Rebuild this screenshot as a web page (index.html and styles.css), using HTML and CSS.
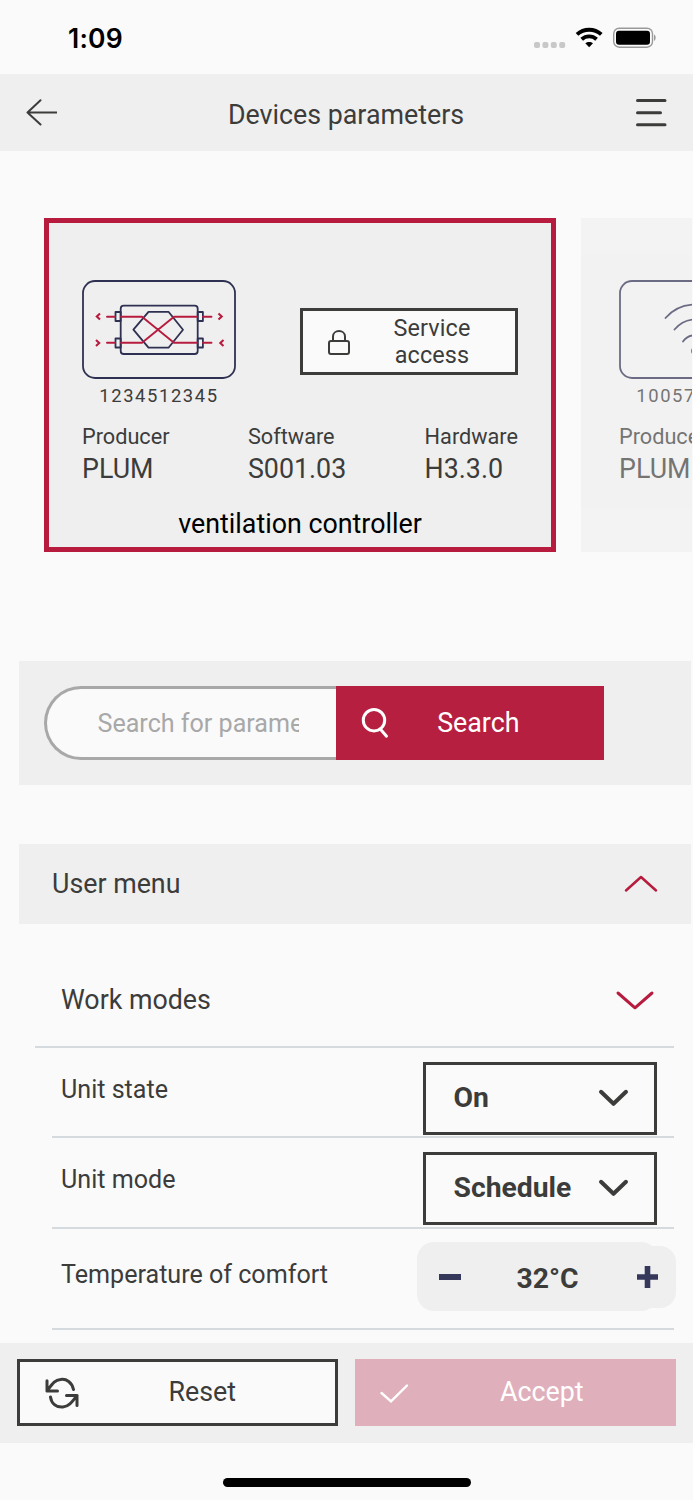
FILE: index.html
```html
<!DOCTYPE html>
<html lang="en">
<head>
<meta charset="utf-8">
<title>Devices parameters</title>
<link rel="stylesheet" href="styles.css">
</head>
<body>
<div class="app">
  <div class="status">
    <span class="time">1:09</span>
    <svg class="status-icons" width="126" height="26" viewBox="0 0 126 26">
      <g fill="#c8c8c8"><rect x="2" y="16" width="6" height="6" rx="2"/><rect x="10.400" y="16" width="6" height="6" rx="2"/><rect x="18.800" y="16" width="6" height="6" rx="2"/><rect x="27.200" y="16" width="6" height="6" rx="2"/></g>
      <g fill="none" stroke="#000" stroke-width="3.900"><path d="M45 8.400C52 2.200 62.300 2.200 69.300 8.400"/><path d="M49.700 13.200C54 9.400 60.300 9.400 64.600 13.200"/></g>
      <path d="M53.300 17.300C55.500 15.500 58.800 15.500 61 17.300L57.150 21.300Z"/>
      <rect x="81.700" y="2.200" width="38.800" height="19" rx="5.500" fill="none" stroke="#999" stroke-width="1.400"/>
      <rect x="84" y="4.800" width="34" height="14" rx="3"/>
      <path d="M122 8.400C124.200 9.400 124.200 13.800 122 14.800Z" fill="#999"/>
    </svg>
  </div>

  <header class="topbar">
    <svg class="icon" width="32" height="28" viewBox="0 0 32 28" stroke-width="2"><path d="M15.500 1.300L2.500 13.500L15.500 25.500M2.500 13.500H31.500"/></svg>
    <h1 class="title">Devices parameters</h1>
    <svg class="icon" width="32" height="30" viewBox="0 0 32 30" stroke-width="3"><path d="M2.500 2.600H30M2.500 14.700H25.500M2.500 26.800H30"/></svg>
  </header>

  <section class="devices">
    <article class="card selected">
      <div class="card-top">
        <div class="device">
          <svg class="device-icon" width="154" height="99" viewBox="0 0 154 99" fill="none" stroke-linecap="round" stroke-linejoin="round">
            <g stroke="#2f3152" stroke-width="1.800">
              <rect x="1" y="1" width="152" height="97" rx="12"/>
              <rect x="38.700" y="25.700" width="77" height="48.300" rx="3"/>
              <rect x="33.500" y="32" width="5.200" height="9"/><rect x="33.500" y="58.500" width="5.200" height="9"/>
              <rect x="115.700" y="32" width="5.200" height="9"/><rect x="115.700" y="58.500" width="5.200" height="9"/>
              <path d="M51.400 49.700L66.500 31.800H86.500L101 49.700L86.500 67.700H66.500Z"/>
            </g>
            <path stroke="#b71c3f" stroke-width="1.900" d="M25 36.700H33M39 36.700H60L92 62.800H115M121 62.800H129.500M25 62.800H33M39 62.800H60L92 36.700H115M121 36.700H129.500"/>
            <path stroke="#b71c3f" stroke-width="2.100" stroke-linecap="butt" stroke-linejoin="miter" d="M18 33.500L14.800 36.500L18 39.500M14 60L17.200 63L14 66M136.500 33.500L139.700 36.500L136.500 39.500M141.500 60L138.300 63L141.500 66"/>
          </svg>
          <span class="serial">1234512345</span>
        </div>
        <button class="service">
          <svg class="icon" width="24" height="27" viewBox="0 0 24 27" stroke-width="2"><rect x="2" y="12" width="20" height="13" rx="2"/><path d="M6 12V7.500C6 0.300 18 0.300 18 7.500V12"/></svg>
          <span class="service-label">Service access</span>
        </button>
      </div>
      <dl class="facts">
        <div class="fact"><dt>Producer</dt><dd>PLUM</dd></div>
        <div class="fact"><dt>Software</dt><dd>S001.03</dd></div>
        <div class="fact"><dt>Hardware</dt><dd>H3.3.0</dd></div>
      </dl>
      <p class="device-name">ventilation controller</p>
    </article>
    <article class="card faded">
      <div class="card-top">
        <div class="device">
          <svg class="device-icon" width="154" height="99" viewBox="0 0 154 99" fill="none" stroke="#2f3152" stroke-width="1.800" stroke-linecap="round">
            <rect x="1" y="1" width="152" height="97" rx="12"/>
            <path d="M46.500 38C62 20 92 20 107.500 38M55.500 49.500C67 36 87 36 98.500 49.500M64 61.500C70 53 84 53 90 61.500"/><circle cx="77" cy="71" r="4"/>
          </svg>
          <span class="serial">1005712345</span>
        </div>
      </div>
      <dl class="facts">
        <div class="fact"><dt>Producer</dt><dd>PLUM</dd></div>
      </dl>
    </article>
  </section>

  <section class="search">
    <div class="search-field"><span class="placeholder">Search for parameter</span></div>
    <button class="search-button">
      <svg width="30" height="34" viewBox="0 0 30 34" fill="none" stroke="#fff" stroke-width="3" stroke-linecap="round"><circle cx="14" cy="14.200" r="10.700"/><path d="M20.500 23.200L26.500 30.200"/></svg>
      <span class="search-label">Search</span>
    </button>
  </section>

  <section class="menu">
    <span>User menu</span>
    <svg class="accent" width="36" height="20" viewBox="0 0 36 20" stroke-width="2.500"><path d="M3 16.500L18 3L33 16.500"/></svg>
  </section>

  <main class="params">
    <div class="group">
      <span>Work modes</span>
      <svg class="accent" width="40" height="22" viewBox="0 0 40 22" stroke-width="3"><path d="M3 4L20 18.800L37 4"/></svg>
    </div>
    <div class="param">
      <span class="param-name">Unit state</span>
      <div class="select"><span>On</span><svg class="icon" width="32" height="20" viewBox="0 0 32 20" stroke-width="4"><path d="M4 3.800L16.500 15.800L29 3.800"/></svg></div>
    </div>
    <div class="param">
      <span class="param-name">Unit mode</span>
      <div class="select"><span>Schedule</span><svg class="icon" width="32" height="20" viewBox="0 0 32 20" stroke-width="4"><path d="M4 3.800L16.500 15.800L29 3.800"/></svg></div>
    </div>
    <div class="param temperature">
      <span class="param-name">Temperature of comfort</span>
      <div class="stepper">
        <div class="stepper-main">
          <svg width="22" height="22" viewBox="0 0 22 22" stroke="#35385a" stroke-width="6"><path d="M0 11H22"/></svg>
          <span class="value">32°C</span>
        </div>
        <div class="stepper-plus">
          <svg width="21" height="22" viewBox="0 0 21 22" stroke="#35385a" stroke-width="5.600"><path d="M0 11H21M10.500 0V22"/></svg>
        </div>
      </div>
    </div>
  </main>

  <footer class="actions">
    <button class="action reset">
      <svg class="icon" width="34" height="32" viewBox="0 0 34 32" stroke-width="3"><path d="M2 3.800V14H12.500M2 14C8 6 10 3 15.500 2.500C21.500 1.500 27 5.500 28.500 12.500M32 28.500V18.500H21.500M32 18.500C27 25 24 29.500 18 30C11.500 30.500 6.500 27 5.500 20"/></svg>
      <span class="action-label">Reset</span>
    </button>
    <button class="action accept">
      <svg width="30" height="22" viewBox="0 0 30 22" fill="none" stroke="#fff" stroke-width="2.400" stroke-linecap="round"><path d="M2.500 11L12 19.300L28 3.500"/></svg>
      <span class="action-label">Accept</span>
    </button>
  </footer>
  <div class="home"><div class="home-bar"></div></div>
</div>
</body>
</html>
```

FILE: styles.css
```css
* { box-sizing: border-box; }
body { margin: 0; background: #fafafa; }
.app {
  width: 693px;
  height: 1500px;
  overflow: hidden;
  display: flex;
  flex-direction: column;
  font-family: Roboto, sans-serif;
  font-size: 26.8px;
  line-height: 32px;
  color: #3c3c3b;
}
.app > * { flex-shrink: 0; }
button { margin: 0; border: 0; border-radius: 0; font: inherit; color: inherit; }
svg { display: block; flex: none; }
.icon { fill: none; stroke: #3c3c3b; stroke-linecap: round; stroke-linejoin: round; }
.accent { fill: none; stroke: #b71c3f; stroke-linecap: round; stroke-linejoin: round; }

.status { height: 74px; padding: 22px 35.500px 0 68px; display: flex; justify-content: space-between; }
.time { font: 600 26.500px/32px Inter, sans-serif; letter-spacing: .2px; color: #000; }
.status-icons { margin-top: 4px; }

.topbar { height: 77px; padding: 0 26px 0 25px; display: flex; align-items: center; justify-content: space-between; background: #efefef; }
.title { margin: 4px 0 0; font: inherit; }

.devices { width: 691.500px; height: 510px; padding: 67px 0 0 44px; display: flex; align-items: flex-start; gap: 25px; overflow: hidden; }
.card { width: 512px; height: 334px; flex: none; padding: 62px 38px 0; background: #efefef; }
.selected { padding: 57px 33px 0; border: 5px solid #b71c3f; }
.faded { opacity: .7; }
.card-top { display: flex; justify-content: space-between; }
.device { width: 154px; display: flex; flex-direction: column; align-items: center; }
.serial { margin-top: 4px; font-size: 18.400px; line-height: 26px; letter-spacing: 1.600px; }
.service { width: 218px; height: 67px; margin-top: 27.500px; padding: 2px 24px 0; border: 3px solid #3c3c3b; background: #fafafa; display: flex; align-items: center; }
.service-label { width: 100px; margin-left: 31px; font-size: 23.400px; line-height: 26.800px; text-align: center; letter-spacing: .15px; }
.facts { margin: 14px 0 0; display: flex; justify-content: space-between; }
.fact dt { font-size: 21.700px; line-height: 28px; }
.fact dd { margin: 2px 0 0; line-height: 32px; }
.device-name { margin: 23px 0 0; text-align: center; color: #000; }

.search { width: 672px; height: 124px; margin-left: 19px; padding: 25px; display: flex; background: #efefef; }
.search-field { width: 292px; height: 74px; padding: 18.500px 37px 0 50.500px; border: 3px solid #a8a8a8; border-right: 0; border-radius: 37px 0 0 37px; background: #fafafa; }
.placeholder { display: block; overflow: hidden; white-space: nowrap; font-size: 25.100px; color: #a8a8a8; }
.search-button { width: 267.500px; height: 74px; padding: 0 84px 0 24px; display: flex; align-items: center; justify-content: space-between; background: #b71f40; color: #fff; }
.search-label { margin-top: -1px; }

.menu { width: 672px; height: 80px; margin: 59px 0 0 19px; padding: 0 32px 0 33px; display: flex; align-items: center; justify-content: space-between; background: #efefef; }

.params { height: 418.500px; padding-right: 19px; overflow: hidden; }
.group { height: 124px; margin-left: 35px; padding: 29px 19px 0 26px; display: flex; align-items: center; justify-content: space-between; border-bottom: 2px solid #d5dadf; }
.param { height: 90.300px; margin-left: 52px; padding: 13.500px 17px 0 9px; display: flex; justify-content: space-between; border-bottom: 2px solid #d5dadf; }
.param-name { margin-top: 12.500px; font-size: 25.100px; }
.select { width: 234px; height: 73px; padding: 0 25px 0 27.500px; border: 3.500px solid #3c3c3b; display: flex; align-items: center; justify-content: space-between; font-size: 28.300px; font-weight: 700; }
.temperature { height: 101px; padding: 13.500px 0 0 9px; }
.temperature .param-name { margin-top: 17px; }
.stepper { width: 259px; height: 69px; margin-right: -2px; display: flex; align-items: center; }
.stepper-main { width: 241px; height: 69px; padding-left: 21.500px; display: flex; align-items: center; border-radius: 17px; background: #efefef; }
.value { width: 64px; margin: 5px 0 0 55px; font-size: 28.300px; font-weight: 700; text-align: center; }
.stepper-plus { width: 52px; height: 62px; margin-left: -34px; padding-left: 12.500px; display: flex; align-items: center; border-radius: 16px; background: #efefef; }

.actions { height: 100.500px; padding: 16.500px 17px; display: flex; gap: 17px; background: #efefef; }
.action { flex: none; width: 321px; height: 67px; display: flex; align-items: center; justify-content: space-between; }
.action-label { margin-top: -2px; }
.reset { border: 3px solid #3c3c3b; background: #fafafa; padding: 0 99px 0 25px; }
.accept { background: #dfb0bc; color: #fff; padding: 0 92.500px 0 24px; }
.home { height: 57px; padding-top: 35px; display: flex; justify-content: center; align-items: flex-start; }
.home-bar { width: 248px; height: 8.500px; border-radius: 5px; background: #000; }
```
